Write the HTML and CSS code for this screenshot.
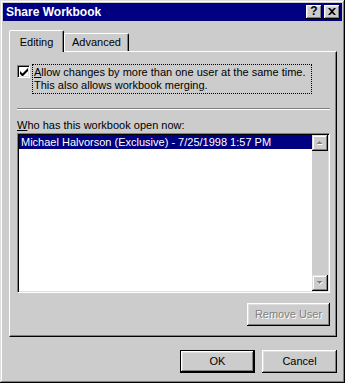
FILE: index.html
```html
<!DOCTYPE html>
<html lang="en">
<head>
    <meta charset="UTF-8">
    <title>Share Workbook</title>
    <link rel="stylesheet" href="styles.css">
</head>
<body>
    <div class="window">
        <div class="titlebar">
            <span class="title">Share Workbook</span>
            <div class="caption-btns">
                <div class="cap-btn help">?</div>
                <div class="cap-btn close">
                    <svg width="8" height="7" viewBox="0 0 8 7"><path d="M0 0h2l2 2 2-2h2L5 3.5 8 7H6L4 5 2 7H0l3-3.5z" fill="#000"/></svg>
                </div>
            </div>
        </div>

        <div class="content">
            <div class="tabs">
                <div class="tab active"><span>Editing</span></div>
                <div class="tab"><span>Advanced</span></div>
            </div>

            <div class="panel">
                <div class="check-row">
                    <div class="checkbox">
                        <svg width="8" height="8" viewBox="0 0 8 8"><path d="M0 3v3l2.5 2.5L8 3V0L2.5 5.5z" fill="#000"/></svg>
                    </div>
                    <div class="focus-text"><u>A</u>llow changes by more than one user at the same time.<br>This also allows workbook merging.</div>
                </div>

                <div class="sep"></div>

                <div class="list-label"><u>W</u>ho has this workbook open now:</div>
                <div class="listbox">
                    <div class="list-items">
                        <div class="list-item selected">Michael Halvorson (Exclusive) - 7/25/1998 1:57 PM</div>
                    </div>
                    <div class="scrollbar">
                        <div class="sb-btn">
                            <svg width="8" height="5" viewBox="0 0 8 5"><path d="M4 1l3 3H1z" fill="#fff"/><path d="M3.5 0l3 3h-6z" fill="#808080"/></svg>
                        </div>
                        <div class="sb-track"></div>
                        <div class="sb-btn">
                            <svg width="8" height="5" viewBox="0 0 8 5"><path d="M1 1h6l-3 3z" fill="#fff"/><path d="M0.5 0h6l-3 3z" fill="#808080"/></svg>
                        </div>
                    </div>
                </div>

                <div class="panel-actions">
                    <div class="btn remove disabled">Remove User</div>
                </div>
            </div>

            <div class="dialog-actions">
                <div class="btn default">OK</div>
                <div class="btn">Cancel</div>
            </div>
        </div>
    </div>
</body>
</html>
```

FILE: styles.css
```css
body {
    margin: 0;
    background-color: #cccccc;
    font-family: "Liberation Sans", Arial, sans-serif;
    font-size: 11px;
    line-height: 13px;
    color: #000;
}

.window {
    width: 345px;
    height: 383px;
    box-sizing: border-box;
    padding: 3px;
    background-color: #cccccc;
    box-shadow: inset -1px -1px #000, inset 1px 1px #dfdfdf, inset -2px -2px #808080, inset 2px 2px #fff;
    display: flex;
    flex-direction: column;
}

/* title bar */
.titlebar {
    height: 18px;
    background-color: #000080;
    color: #fff;
    display: flex;
    align-items: center;
    justify-content: space-between;
    padding: 0 2px 0 3px;
}

.title {
    font-weight: bold;
    font-size: 12px;
}

.caption-btns {
    display: flex;
    gap: 2px;
}

.cap-btn {
    width: 16px;
    height: 14px;
    box-sizing: border-box;
    background-color: #cccccc;
    box-shadow: inset -1px -1px #000, inset 1px 1px #fff, inset -2px -2px #808080, inset 2px 2px #dfdfdf;
    color: #000;
    display: flex;
    align-items: center;
    justify-content: center;
}

.cap-btn.help {
    font-weight: bold;
    font-size: 12px;
    padding-bottom: 1px;
}

.cap-btn.close svg {
    margin-top: -1px;
}

/* body */
.content {
    flex: 1;
    padding: 9px 5px 0 6px;
    display: flex;
    flex-direction: column;
}

.tabs {
    display: flex;
    align-items: flex-end;
    height: 21px;
}

.tab {
    height: 18px;
    box-sizing: border-box;
    width: 65px;
    border-top: 1px solid #fff;
    border-left: 1px solid #fff;
    border-right: 1px solid #000;
    border-radius: 2px 2px 0 0;
    box-shadow: inset -1px 0 #808080;
    display: flex;
    align-items: flex-end;
    justify-content: center;
    padding-bottom: 2px;
}

.tab.active {
    width: 55px;
    height: 22px;
    margin-bottom: -1px;
    padding-bottom: 3px;
    position: relative;
    z-index: 1;
    background-color: #cccccc;
}

.panel {
    height: 286px;
    box-sizing: border-box;
    border-top: 1px solid #fff;
    border-left: 1px solid #fff;
    border-right: 1px solid #000;
    border-bottom: 1px solid #000;
    box-shadow: inset -1px -1px #808080;
    padding: 12px 6px 0 7px;
    display: flex;
    flex-direction: column;
}

.check-row {
    display: flex;
    align-items: flex-start;
}

.checkbox {
    width: 13px;
    height: 13px;
    box-sizing: border-box;
    margin-top: 1px;
    background-color: #fff;
    border: 1px solid;
    border-color: #808080 #fff #fff #808080;
    box-shadow: inset 1px 1px #000, inset -1px -1px #dfdfdf;
    display: flex;
    align-items: center;
    justify-content: center;
}

.focus-text {
    width: 280px;
    box-sizing: border-box;
    margin-left: 2px;
    border: 1px dotted #000;
    padding: 1px;
}

.sep {
    margin-top: 14px;
    border-top: 1px solid #808080;
    border-bottom: 1px solid #fff;
}

.list-label {
    margin-top: 9px;
}

.listbox {
    margin-top: 1px;
    height: 160px;
    box-sizing: border-box;
    border: 1px solid;
    border-color: #808080 #fff #fff #808080;
    box-shadow: inset 1px 1px #000, inset -1px -1px #dfdfdf;
    padding: 1px;
    display: flex;
}

.list-items {
    flex: 1;
    background-color: #fff;
}

.list-item {
    height: 14px;
    line-height: 14px;
    padding-left: 2px;
    white-space: nowrap;
}

.list-item.selected {
    background-color: #000080;
    color: #fff;
}

.scrollbar {
    width: 16px;
    display: flex;
    flex-direction: column;
}

.sb-btn {
    height: 16px;
    box-sizing: border-box;
    background-color: #cccccc;
    box-shadow: inset -1px -1px #000, inset 1px 1px #dfdfdf, inset -2px -2px #808080, inset 2px 2px #fff;
    display: flex;
    align-items: center;
    justify-content: center;
}

.sb-track {
    flex: 1;
    background-color: #cccccc;
}

.panel-actions {
    margin-top: 10px;
    display: flex;
    justify-content: flex-end;
}

.btn {
    width: 75px;
    height: 23px;
    box-sizing: border-box;
    background-color: #cccccc;
    box-shadow: inset -1px -1px #000, inset 1px 1px #fff, inset -2px -2px #808080, inset 2px 2px #dfdfdf;
    display: flex;
    align-items: center;
    justify-content: center;
}

.btn.remove {
    width: 83px;
}

.btn.disabled {
    color: #808080;
    text-shadow: 1px 1px #fff;
}

.btn.default {
    box-shadow: inset 0 0 0 1px #000, inset -2px -2px #000, inset 2px 2px #fff, inset -3px -3px #808080, inset 3px 3px #dfdfdf;
}

.dialog-actions {
    margin-top: 13px;
    display: flex;
    justify-content: flex-end;
    gap: 7px;
}
```
